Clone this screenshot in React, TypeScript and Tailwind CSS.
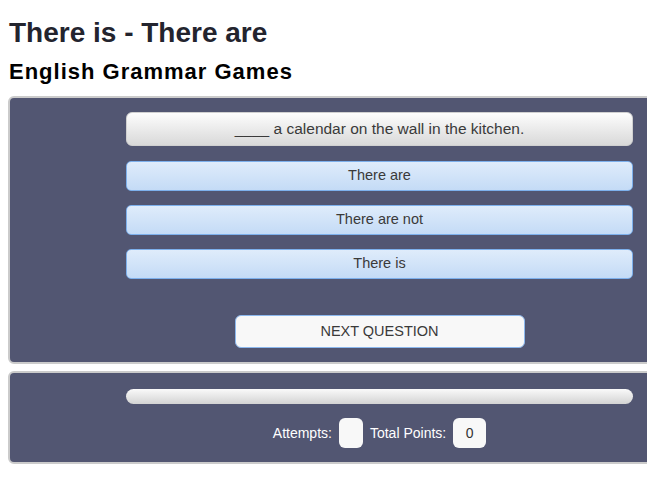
import React from 'react';

const options = ['There are', 'There are not', 'There is'];

export default function App() {
  return (
    <div className="w-[647px] h-[480px] overflow-hidden bg-white font-['Liberation_Sans',Arial,sans-serif]">
      <div className="pl-2">
        <h1 className="pt-[17px] pl-px text-[28px] leading-[32px] font-bold text-[#23242e]">
          There is - There are
        </h1>
        <h2 className="mt-[10px] pl-px text-[22px] leading-[26px] font-bold tracking-[1px] text-black">
          English Grammar Games
        </h2>

        {/* Question panel */}
        <div className="mt-[11px] w-[660px] rounded-l-[6px] border-2 border-[#cbcbcb] bg-[#525672] pt-[14px] pb-[14px]">
          <div className="ml-[116px] w-[507px] flex flex-col">
            <div className="h-[34px] flex items-center justify-center rounded-[6px] border border-[#d0d0d0] bg-gradient-to-b from-[#fdfdfd] to-[#d9d9d9] text-[15.5px] text-[#3a3a3a]">
              ____ a calendar on the wall in the kitchen.
            </div>
            <div className="mt-[15px] flex flex-col gap-[14px]">
              {options.map((o) => (
                <div
                  key={o}
                  className="h-[30px] flex items-center justify-center rounded-[5px] border border-[#7db0ec] bg-gradient-to-b from-[#dfecfb] to-[#c4dbf6] text-[14.5px] text-[#3a3a3a]"
                >
                  {o}
                </div>
              ))}
            </div>
            <div className="mt-[36px] flex justify-center">
              <div className="w-[290px] h-[33px] flex items-center justify-center rounded-[6px] border border-[#8cb8ee] bg-[#f8f8f8] text-[14.5px] text-[#3a3a3a]">
                NEXT QUESTION
              </div>
            </div>
          </div>
        </div>

        {/* Score panel */}
        <div className="mt-[7px] w-[660px] rounded-l-[6px] border-2 border-[#cbcbcb] bg-[#525672] pt-[16px] pb-[14px]">
          <div className="ml-[116px] w-[507px] flex flex-col">
            <div className="h-[15px] rounded-full bg-gradient-to-b from-[#fafafa] to-[#d3d3d3]" />
            <div className="mt-[14px] flex items-center justify-center gap-[7px] text-[14px] text-white">
              <span>Attempts:</span>
              <div className="w-[24px] h-[30px] rounded-[6px] bg-[#f8f8f8]" />
              <span>Total Points:</span>
              <div className="w-[33px] h-[30px] rounded-[6px] bg-[#f8f8f8] flex items-center justify-center text-[#333]">
                0
              </div>
            </div>
          </div>
        </div>
      </div>
    </div>
  );
}
